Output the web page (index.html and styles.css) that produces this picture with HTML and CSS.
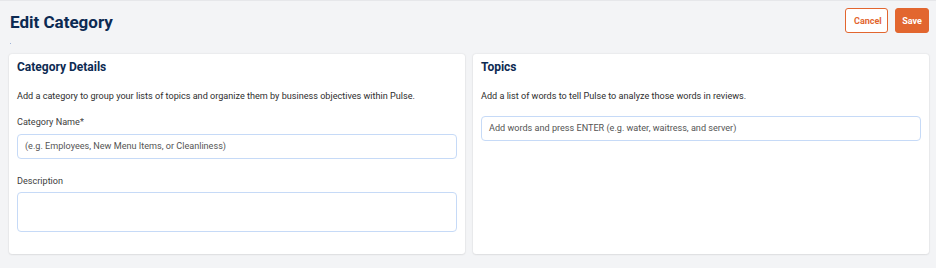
FILE: index.html
```html
<!DOCTYPE html>
<html>
<head>
<meta charset="utf-8">
<link rel="stylesheet" href="styles.css">
</head>
<body>
<div class="page">
  <header class="top">
    <h1 class="title">Edit Category</h1>
    <div class="actions">
      <button class="btn btn-outline">Cancel</button>
      <button class="btn btn-primary">Save</button>
    </div>
  </header>
  <div class="dot"></div>
  <div class="cards">
    <section class="card">
      <h2 class="card-title">Category Details</h2>
      <p class="card-text">Add a category to group your lists of topics and organize them by business objectives within Pulse.</p>
      <label class="label">Category Name*</label>
      <div class="input">(e.g. Employees, New Menu Items, or Cleanliness)</div>
      <label class="label label-desc">Description</label>
      <div class="textarea"></div>
    </section>
    <section class="card">
      <h2 class="card-title">Topics</h2>
      <p class="card-text">Add a list of words to tell Pulse to analyze those words in reviews.</p>
      <div class="input input-topics">Add words and press ENTER (e.g. water, waitress, and server)</div>
    </section>
  </div>
</div>
</body>
</html>
```
FILE: styles.css
```css
* { box-sizing: border-box; }
html, body { margin: 0; padding: 0; }
body {
  background: #f3f4f6;
  font-family: Roboto, "Liberation Sans", sans-serif;
  width: 936px;
  height: 268px;
  overflow: hidden;
  border-top: 1px solid #e6e7ea;
}
.page {
  padding: 7px 7px 0 9px;
}
.top {
  display: flex;
  justify-content: space-between;
  align-items: flex-start;
  height: 34px;
}
.title {
  margin: 3px 0 0 1px;
  font-size: 17px;
  font-weight: 700;
  color: #0c2a52;
  line-height: 22px;
}
.actions {
  display: flex;
  gap: 7px;
}
.btn {
  height: 25px;
  border-radius: 3px;
  font-family: Roboto, "Liberation Sans", sans-serif;
  font-size: 9px;
  font-weight: 700;
  padding: 0 8px;
  cursor: pointer;
}
.btn-outline {
  background: #fff;
  border: 1px solid #e2662f;
  color: #e2662f;
  width: 43px;
}
.btn-primary {
  background: #e2662f;
  border: 1px solid #e2662f;
  color: #fff;
  width: 34px;
  padding: 0;
}
.dot {
  width: 1px;
  height: 1px;
  background: #9fb3d8;
  margin: 1px 0 10px 1px;
}
.cards {
  display: grid;
  grid-template-columns: 456px 456px;
  gap: 8px;
}
.card {
  background: #fff;
  border-radius: 3px;
  box-shadow: 0 0 2px rgba(0,0,0,0.12), 0 1px 2px rgba(0,0,0,0.06);
  height: 200px;
  padding: 6px 8px 0 8px;
}
.card-title {
  margin: 0;
  font-size: 12px;
  font-weight: 700;
  color: #0c2a52;
  line-height: 14px;
}
.card-text {
  margin: 16px 0 0 0;
  font-size: 9.1px;
  color: #2e2e2e;
  line-height: 12px;
}
.label {
  display: block;
  margin-top: 14px;
  font-size: 9.1px;
  color: #404040;
  line-height: 12px;
}
.label-desc { margin-top: 16px; }
.input {
  margin-top: 6px;
  height: 25px;
  border: 1px solid #c6daf7;
  border-radius: 4px;
  font-size: 9.1px;
  color: #555;
  line-height: 23px;
  padding: 0 7px;
}
.input-topics { margin-top: 14px; }
.textarea {
  margin-top: 5px;
  height: 40px;
  border: 1px solid #c6daf7;
  border-radius: 4px;
}
```
